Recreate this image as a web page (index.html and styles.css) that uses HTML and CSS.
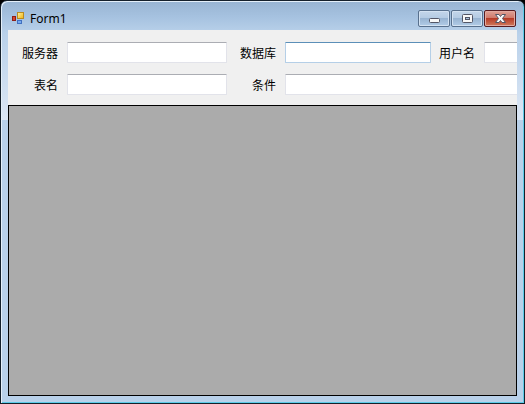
FILE: index.html
```
<!DOCTYPE html>
<html lang="zh-CN">
  <head>
    <meta charset="UTF-8" />
    <meta name="viewport" content="width=device-width, initial-scale=1.0" />
    <title>Form1</title>
    <link rel="stylesheet" href="styles.css">
  </head>
  <body>
    <div class="window">
      <header class="titlebar">
        <svg class="app-icon" width="16" height="16" viewBox="0 0 16 16" aria-hidden="true">
          <defs>
            <linearGradient id="yellow" x1="0" y1="0" x2="1" y2="1">
              <stop offset="0" stop-color="#fff3a0" />
              <stop offset="1" stop-color="#eeb211" />
            </linearGradient>
          </defs>
          <rect x="2.5" y="6.5" width="3" height="4" fill="#d8442c" stroke="#8f1f18" />
          <rect x="7.5" y="2.5" width="6" height="6" fill="url(#yellow)" stroke="#b98a20" />
          <rect x="7.5" y="10.5" width="4" height="3" fill="#76aaf0" stroke="#4170c0" />
        </svg>
        <h1 class="title">Form1</h1>
        <div class="controls">
          <button type="button" class="control" aria-label="最小化">
            <svg width="13" height="13" viewBox="0 0 13 13">
              <rect x="1.5" y="6.5" width="10" height="4" rx="1" fill="#f8f8f8" stroke="#535666" />
            </svg>
          </button>
          <button type="button" class="control" aria-label="最大化">
            <svg width="13" height="13" viewBox="0 0 13 13">
              <rect x="1.5" y="2.5" width="10" height="8" rx="1" fill="#f8f8f8" stroke="#535666" />
              <rect x="4.5" y="5.5" width="4" height="2" fill="#a9c1dc" stroke="#535666" />
            </svg>
          </button>
          <button type="button" class="control close" aria-label="关闭">
            <svg width="13" height="13" viewBox="0 0 13 13">
              <path d="M1.500 2.500h3.500l1.500 2 1.500-2h3.500l-3 4 3 4h-3.500l-1.500-2-1.500 2h-3.500l3-4z" fill="#f8f8f8" stroke="#535666" stroke-linejoin="round" />
            </svg>
          </button>
        </div>
      </header>

      <main class="client">
        <form class="query">
          <label for="server">服务器</label>
          <input type="text" id="server" />
          <label for="database">数据库</label>
          <input type="text" id="database" class="active" />
          <label for="user">用户名</label>
          <input type="text" id="user" />

          <label for="table">表名</label>
          <input type="text" id="table" />
          <label for="condition">条件</label>
          <input type="text" id="condition" class="wide" />
        </form>
        <div class="data-grid"></div>
      </main>
    </div>
  </body>
</html>
```
FILE: styles.css
```
* {
  box-sizing: border-box;
}
body {
  margin: 0;
  background: #000;
  font-family: "Liberation Sans", "Noto Sans CJK SC", sans-serif;
  font-size: 12px;
  color: #000;
}
.window {
  display: flex;
  flex-direction: column;
  height: 100vh;
  padding: 0 7px 7px;
  border: 1px solid #15202b;
  border-radius: 7px 7px 0 0;
  background: linear-gradient(#98b4d2, #a6c2e0 16px, #b9d1ea 32px, #dce7f5 119px, #b9d1ea 119px);
  box-shadow: inset 1px 1px #e4eff9, inset -1px -1px #5ccbe8;
}
.titlebar {
  display: flex;
  align-items: center;
  height: 29px;
  padding: 5px 1px 0 2px;
  flex-shrink: 0;
}
.title {
  margin: 0 0 0 4px;
  padding-top: 2px;
  font-family: "Noto Sans", sans-serif;
  font-size: 12px;
  font-weight: normal;
  line-height: 16px;
}
.controls {
  display: flex;
  gap: 1px;
  margin-left: auto;
}
.control {
  display: flex;
  align-items: center;
  justify-content: center;
  width: 32px;
  height: 17px;
  padding: 0;
  border: 1px solid #58708d;
  border-radius: 2px;
  background: linear-gradient(#c4d6ea, #b3cae3 50%, #98b4d2 50%, #b2cce7);
  box-shadow: inset 0 0 0 1px #d3e2f2;
}
.close {
  border-color: #571b20;
  background: linear-gradient(#dfa196, #cf7667 50%, #b73b27 50%, #d17b5d);
  box-shadow: inset 0 0 0 1px #e2a99f;
}
.client {
  display: flex;
  flex: 1;
  flex-direction: column;
  min-height: 0;
  overflow: hidden;
  background: #f0f0f0;
}
.query {
  display: grid;
  grid-template-columns: 59px 160px 58px 146px 53px 160px;
  row-gap: 11px;
  padding: 12px 0 10px;
}
.query label {
  padding: 4px 9px 0 0;
  line-height: 17px;
  text-align: right;
}
.query input {
  width: 100%;
  height: 21px;
  padding: 2px 4px;
  border: 1px solid #e2e3ea;
  border-top-color: #abadb3;
  border-radius: 1px;
  background: #fff;
  font: inherit;
  outline: none;
}
.query .active,
.query input:focus {
  border-color: #b5cfe7;
  border-top-color: #5b8fb8;
}
.query .wide {
  grid-column: 4 / -1;
}
.data-grid {
  flex: 1;
  border: 1px solid #000;
  background: #ababab;
}
```
